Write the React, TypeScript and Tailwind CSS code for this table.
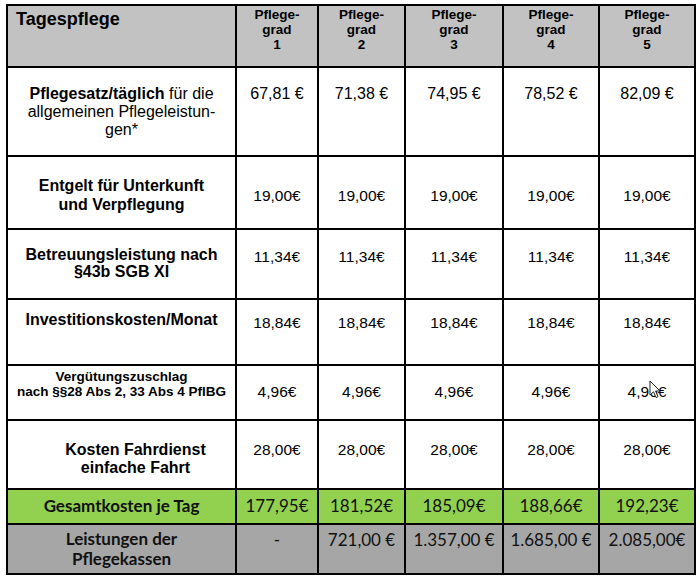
const grades = ["1", "2", "3", "4", "5"];

const rows = [
  {
    h: "h-[89px]",
    labelPad: "pt-[17px]",
    valuePad: "pt-[17px]",
    valueSize: "text-[16px] leading-[18px]",
    values: ["67,81 €", "71,38 €", "74,95 €", "78,52 €", "82,09 €"],
    label: (
      <p className="text-[16px] leading-[18px]">
        <b>Pflegesatz/täglich</b> für die allgemeinen Pflegeleistun-
        <br />
        gen*
      </p>
    ),
  },
  {
    h: "h-[73px]",
    labelPad: "pt-[19px]",
    valuePad: "pt-[30px]",
    valueSize: "text-[15.5px] leading-[18px]",
    values: ["19,00€", "19,00€", "19,00€", "19,00€", "19,00€"],
    label: (
      <p className="text-[16px] leading-[19px] font-bold">
        Entgelt für Unterkunft
        <br />
        und Verpflegung
      </p>
    ),
  },
  {
    h: "h-[70px]",
    labelPad: "pt-[16px]",
    valuePad: "pt-[18px]",
    valueSize: "text-[15.5px] leading-[18px]",
    values: ["11,34€", "11,34€", "11,34€", "11,34€", "11,34€"],
    label: (
      <p className="text-[16px] leading-[17px] font-bold">
        Betreuungsleistung nach
        <br />
        §43b SGB XI
      </p>
    ),
  },
  {
    h: "h-[66px]",
    labelPad: "pt-[11px]",
    valuePad: "pt-[14px]",
    valueSize: "text-[15.5px] leading-[18px]",
    values: ["18,84€", "18,84€", "18,84€", "18,84€", "18,84€"],
    label: <p className="text-[16px] leading-[18px] font-bold">Investitionskosten/Monat</p>,
  },
  {
    h: "h-[55px]",
    labelPad: "pt-[3px]",
    valuePad: "pt-[17px]",
    valueSize: "text-[15.5px] leading-[18px]",
    values: ["4,96€", "4,96€", "4,96€", "4,96€", "4,96€"],
    label: (
      <p className="text-[13.5px] leading-[15px] font-bold">
        Vergütungszuschlag
        <br />
        nach §§28 Abs 2, 33 Abs 4 PflBG
      </p>
    ),
  },
  {
    h: "h-[69px]",
    labelPad: "pt-[20px] pl-[36px]",
    valuePad: "pt-[20px]",
    valueSize: "text-[15.5px] leading-[18px]",
    values: ["28,00€", "28,00€", "28,00€", "28,00€", "28,00€"],
    label: (
      <p className="text-[16px] leading-[18px] font-bold">
        Kosten Fahrdienst
        <br />
        einfache Fahrt
      </p>
    ),
  },
];

function Cursor() {
  return (
    <svg
      className="absolute left-[649px] top-[380px]"
      width="12"
      height="19"
      viewBox="0 0 12 19"
    >
      <path
        d="M1 1 L1 15 L4.5 11.8 L7 17.5 L9 16.6 L6.6 11 L11 11 Z"
        fill="#fff"
        stroke="#222"
        strokeWidth="1"
        strokeLinejoin="round"
      />
    </svg>
  );
}

export default function App() {
  const cell = "border-2 border-black align-top text-center";
  return (
    <div className="relative w-[700px] h-[579px] bg-white pt-[4px] pl-[6px] text-black font-['Liberation_Sans',Arial,sans-serif]">
      <table className="border-collapse table-fixed w-[688px]">
        <colgroup>
          <col className="w-[229px]" />
          <col className="w-[82px]" />
          <col className="w-[87px]" />
          <col className="w-[98px]" />
          <col className="w-[96px]" />
          <col className="w-[96px]" />
        </colgroup>
        <tbody>
          <tr className="h-[62px] bg-[#c2c2c2]">
            <td className="border-2 border-black align-top text-left pl-[8px] pt-[3px] text-[18px] leading-[20px] font-bold">
              Tagespflege
            </td>
            {grades.map((g) => (
              <td key={g} className={`${cell} pt-[1px] text-[13.5px] leading-[15px] font-bold`}>
                Pflege-
                <br />
                grad
                <br />
                {g}
              </td>
            ))}
          </tr>

          {rows.map((r, i) => (
            <tr key={i} className={r.h}>
              <td className={`${cell} px-[8px] ${r.labelPad}`}>{r.label}</td>
              {r.values.map((v, j) => (
                <td key={j} className={`${cell} ${r.valuePad} ${r.valueSize}`}>
                  {v}
                </td>
              ))}
            </tr>
          ))}

          <tr className="h-[35px] bg-[#92d050] text-[#111] font-['Lato',sans-serif] text-[17px] leading-[20px]">
            <td className={`${cell} pt-[6px] font-bold`}>Gesamtkosten je Tag</td>
            {["177,95€", "181,52€", "185,09€", "188,66€", "192,23€"].map((v) => (
              <td key={v} className={`${cell} pt-[6px]`}>
                {v}
              </td>
            ))}
          </tr>

          <tr className="h-[50px] bg-[#a6a6a6] text-[#111] font-['Lato',sans-serif] text-[17px] leading-[20px]">
            <td className={`${cell} pt-[4px] font-bold`}>
              Leistungen der
              <br />
              Pflegekassen
            </td>
            {["-", "721,00 €", "1.357,00 €", "1.685,00 €", "2.085,00€"].map((v) => (
              <td key={v} className={`${cell} pt-[5px] whitespace-nowrap`}>
                {v}
              </td>
            ))}
          </tr>
        </tbody>
      </table>
      <Cursor />
    </div>
  );
}
